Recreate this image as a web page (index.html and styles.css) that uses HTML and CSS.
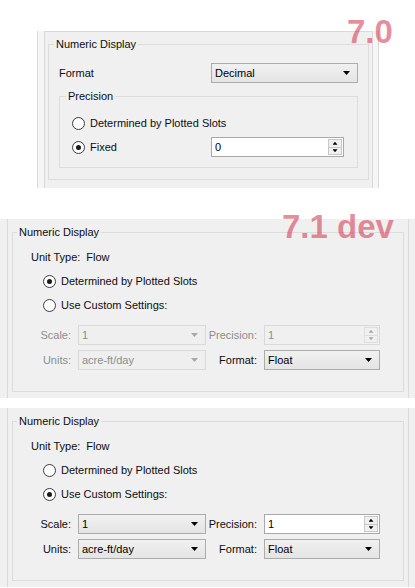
FILE: index.html
```html
<!DOCTYPE html>
<html lang="en">

<head>
  <meta charset="UTF-8">
  <meta name="viewport" content="width=device-width, initial-scale=1.0">
  <title>Numeric Display</title>
  <link rel="stylesheet" href="styles.css">
</head>

<body>

  <section class="shot shot--old">
    <span class="version version--old">7.0</span>
    <div class="frame">
      <div class="pane">
        <fieldset class="group group--old">
          <legend class="group__title">Numeric Display</legend>
          <div class="field">
            <span class="field__label">Format</span>
            <div class="combo combo--format"><span class="combo__value">Decimal</span></div>
          </div>
          <fieldset class="group group--precision">
            <legend class="group__title group__title--inner">Precision</legend>
            <div class="option"><span class="radio"></span>Determined by Plotted Slots</div>
            <div class="option">
              <span class="radio radio--checked"></span>
              <span class="option__text">Fixed</span>
              <div class="spin spin--fixed">
                <span class="spin__value">0</span>
                <span class="spin__buttons"><span class="spin__up"></span><span class="spin__down"></span></span>
              </div>
            </div>
          </fieldset>
        </fieldset>
      </div>
    </div>
  </section>

  <section class="shot shot--new">
    <span class="version version--new">7.1 dev</span>
    <div class="frame frame--new">
      <fieldset class="group group--new">
        <legend class="group__title group__title--new">Numeric Display</legend>
        <div class="unit"><span class="unit__label">Unit Type:</span>Flow</div>
        <div class="option option--new"><span class="radio radio--checked"></span>Determined by Plotted Slots</div>
        <div class="option option--new option--next"><span class="radio"></span>Use Custom Settings:</div>
        <div class="settings">
          <span class="settings__label is-disabled">Scale:</span>
          <div class="combo combo--disabled"><span class="combo__value">1</span></div>
          <span class="settings__label is-disabled">Precision:</span>
          <div class="spin spin--disabled">
            <span class="spin__value">1</span>
            <span class="spin__buttons"><span class="spin__up"></span><span class="spin__down"></span></span>
          </div>
          <span class="settings__label is-disabled">Units:</span>
          <div class="combo combo--disabled"><span class="combo__value">acre-ft/day</span></div>
          <span class="settings__label">Format:</span>
          <div class="combo"><span class="combo__value">Float</span></div>
        </div>
      </fieldset>
    </div>
  </section>

  <section class="shot shot--new shot--last">
    <div class="frame frame--new">
      <fieldset class="group group--new">
        <legend class="group__title group__title--new">Numeric Display</legend>
        <div class="unit"><span class="unit__label">Unit Type:</span>Flow</div>
        <div class="option option--new"><span class="radio"></span>Determined by Plotted Slots</div>
        <div class="option option--new option--next"><span class="radio radio--checked"></span>Use Custom Settings:</div>
        <div class="settings">
          <span class="settings__label">Scale:</span>
          <div class="combo"><span class="combo__value">1</span></div>
          <span class="settings__label">Precision:</span>
          <div class="spin">
            <span class="spin__value">1</span>
            <span class="spin__buttons"><span class="spin__up"></span><span class="spin__down"></span></span>
          </div>
          <span class="settings__label">Units:</span>
          <div class="combo"><span class="combo__value">acre-ft/day</span></div>
          <span class="settings__label">Format:</span>
          <div class="combo"><span class="combo__value">Float</span></div>
        </div>
      </fieldset>
    </div>
  </section>

</body>

</html>
```

FILE: styles.css
```css
*,
*:after,
*:before {
  margin: 0;
  padding: 0;
  box-sizing: border-box;
}

body {
  font-family: "Liberation Sans", Arial, sans-serif;
  font-size: 11px;
  color: #0d0d0d;
  background: #fff;
  width: 415px;
  overflow: hidden;
}

/* screenshots */
.shot {
  position: relative;
}

.shot--old {
  height: 188px;
  padding: 31px 0 0 37px;
}

.shot--new {
  margin-top: 31px;
  background: #f0f0f0;
}

.shot--last {
  margin-top: 10px;
}

.version {
  position: absolute;
  z-index: 5;
  font-family: "Liberation Sans", Arial, sans-serif;
  font-weight: bold;
  font-size: 33px;
  line-height: 1;
  color: rgba(205, 30, 60, 0.5);
  white-space: nowrap;
}

.version--old {
  left: 347px;
  top: 15px;
}

.version--new {
  left: 282px;
  top: -9px;
}

/* window frame */
.frame {
  width: 342px;
  height: 157px;
  background: #f6f6f6;
  border-left: 1px solid #d9d9d9;
  border-right: 1px solid #d9d9d9;
  padding: 0 5px 0 6px;
}

.pane {
  height: 100%;
  background: #f0f0f0;
  border: 1px solid #d9d9d9;
  border-bottom: 0;
  padding: 5px 3px 0 3px;
}

.frame--new {
  width: auto;
  height: auto;
  background: #f0f0f0;
  margin: 0 6px 0 7px;
  padding: 6px 4px 6px 4px;
}

/* group boxes */
.group {
  border: 1px solid #dcdcdc;
  min-inline-size: 0;
}

.group__title {
  line-height: 14px;
  padding: 0 2px;
  margin-left: -5px;
}

.group__title--inner {
  margin-left: -6px;
}

.group__title--new {
  margin-left: 4px;
}

.group--old {
  padding: 0 10px 11px 10px;
}

.group--precision {
  margin-top: 6px;
  padding: 0 10px 10px 12px;
}

.group--new {
  padding: 0 0 21px 0;
}

/* rows */
.field {
  display: flex;
  align-items: center;
  height: 20px;
  margin-top: 12px;
}

.field__label {
  width: 152px;
  flex: none;
}

.combo--format {
  flex: 1;
}

.option {
  display: flex;
  align-items: center;
  height: 20px;
  margin-top: 4px;
}

.option:first-of-type {
  margin-top: 10px;
}

.option .radio {
  margin-right: 5px;
}

.option__text {
  width: 121px;
}

.spin--fixed {
  width: 133px;
}

.unit {
  margin: 10px 0 0 18px;
  line-height: 16px;
}

.unit__label {
  margin-right: 6px;
}

.option--new {
  margin-left: 30px;
  margin-top: 6px;
}

.option--next {
  margin-top: 4px;
}

.settings {
  display: grid;
  grid-template-columns: 47px 128px 58px 116px;
  grid-auto-rows: 20px;
  row-gap: 5px;
  margin: 10px 0 0 18px;
}

.settings__label {
  align-self: center;
  text-align: right;
  padding-right: 7px;
}

.is-disabled {
  color: #8d8d8d;
}

/* radio */
.radio {
  width: 13px;
  height: 13px;
  flex: none;
  border: 1px solid #3c3c3c;
  border-radius: 50%;
  background: #fff;
  display: flex;
  align-items: center;
  justify-content: center;
}

.radio--checked:after {
  content: '';
  width: 5px;
  height: 5px;
  border-radius: 50%;
  background: #1a1a1a;
}

/* combo box */
.combo {
  height: 20px;
  display: flex;
  align-items: center;
  border: 1px solid #acacac;
  background: linear-gradient(#f1f1f1, #e4e4e4);
  padding: 0 7px 0 3px;
  color: #000;
}

.combo__value {
  flex: 1;
  white-space: nowrap;
}

.combo:after {
  content: '';
  width: 7px;
  height: 4px;
  background: #000;
  clip-path: polygon(0 0, 100% 0, 50% 100%);
}

.combo--disabled {
  border-color: #d9d9d9;
  background: #efefef;
  color: #8d8d8d;
}

.combo--disabled:after {
  background: #a8a8a8;
}

/* spin box */
.spin {
  height: 20px;
  display: flex;
  align-items: center;
  border: 1px solid #a9a9a9;
  background: #fff;
  color: #000;
}

.spin__value {
  flex: 1;
  padding-left: 3px;
}

.spin__buttons {
  width: 15px;
  height: 100%;
  display: flex;
  flex-direction: column;
  padding: 1px 1px 1px 0;
}

.spin__up,
.spin__down {
  flex: 1;
  display: flex;
  align-items: center;
  justify-content: center;
  border: 1px solid #c8c8c8;
  background: #f0f0f0;
}

.spin__down {
  border-top: 0;
}

.spin__up:after,
.spin__down:after {
  content: '';
  width: 5px;
  height: 3px;
  background: #000;
}

.spin__up:after {
  clip-path: polygon(50% 0, 100% 100%, 0 100%);
}

.spin__down:after {
  clip-path: polygon(0 0, 100% 0, 50% 100%);
}

.spin--disabled {
  border-color: #d9d9d9;
  background: #f0f0f0;
  color: #8d8d8d;
}

.spin--disabled .spin__up,
.spin--disabled .spin__down {
  border-color: #dedede;
}

.spin--disabled .spin__up:after,
.spin--disabled .spin__down:after {
  background: #a8a8a8;
}
```
